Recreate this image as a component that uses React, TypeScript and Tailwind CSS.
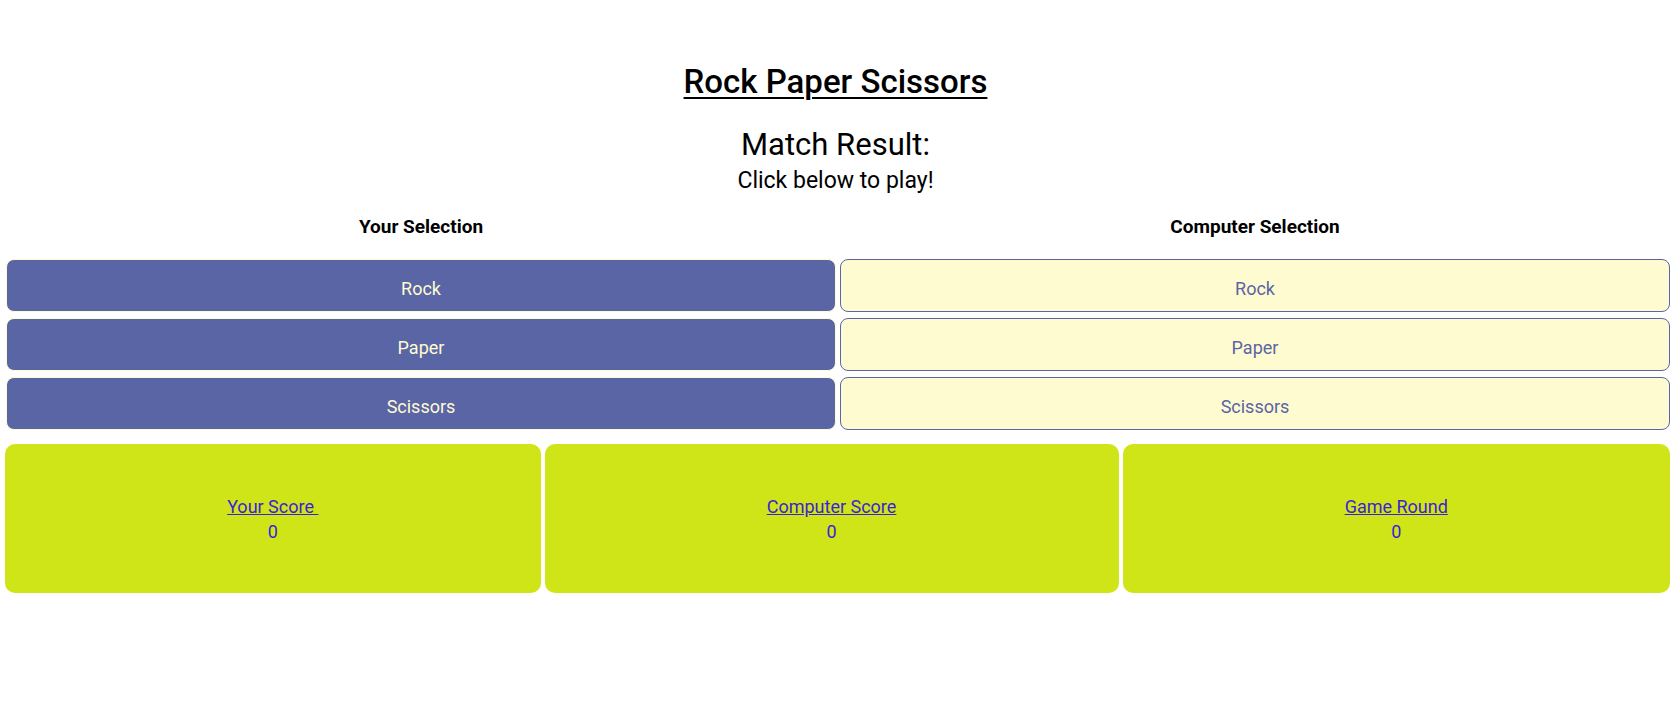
import React from "react";

const choices = ["Rock", "Paper", "Scissors"];

export default function App() {
    const scores = [
        { label: "Your Score\u00a0", value: 0 },
        { label: "Computer Score", value: 0 },
        { label: "Game Round", value: 0 },
    ];

    return (
        <div className="min-h-screen bg-white text-black [font-family:Roboto,'Liberation_Sans',sans-serif]">
            <div className="pt-[62px] text-center">
                <h1 className="text-[33px] leading-[40px] font-medium underline underline-offset-[4px] decoration-[2px]">
                    Rock Paper Scissors
                </h1>
                <h2 className="mt-[25px] text-[31px] leading-[36px] font-normal">Match Result:</h2>
                <p className="mt-[4px] text-[23px] leading-[28px]">Click below to play!</p>
            </div>

            <div className="grid grid-cols-2 gap-x-[4px] pl-[6px] pr-[1px] mt-[20px]">
                <h3 className="text-center text-[19px] leading-[24px] font-bold">Your Selection</h3>
                <h3 className="text-center text-[19px] leading-[24px] font-bold">Computer Selection</h3>

                <div className="mt-[20px] flex flex-col gap-[6px]">
                    {choices.map((c) => (
                        <button
                            key={c}
                            className="h-[53px] pt-[5px] flex items-center justify-center rounded-[8px] bg-[#5a65a6] border border-[#fffbd1] text-[#fffbd1] text-[18px]"
                        >
                            {c}
                        </button>
                    ))}
                </div>
                <div className="mt-[20px] flex flex-col gap-[6px]">
                    {choices.map((c) => (
                        <button
                            key={c}
                            className="h-[53px] pt-[5px] flex items-center justify-center rounded-[8px] bg-[#fffbd1] border border-[#5a65a6] text-[#5a65a6] text-[18px]"
                        >
                            {c}
                        </button>
                    ))}
                </div>
            </div>

            <div className="flex gap-[4px] pl-[5px] pr-[1px] mt-[14px]">
                {scores.map((s) => (
                    <div
                        key={s.label}
                        className="flex-auto h-[149px] rounded-[10px] bg-[#cfe518] flex flex-col items-center justify-center text-[18px] leading-[25px] text-[#3b22d9]"
                    >
                        <a href="#" className="underline">{s.label}</a>
                        <span>{s.value}</span>
                    </div>
                ))}
            </div>
        </div>
    );
}
